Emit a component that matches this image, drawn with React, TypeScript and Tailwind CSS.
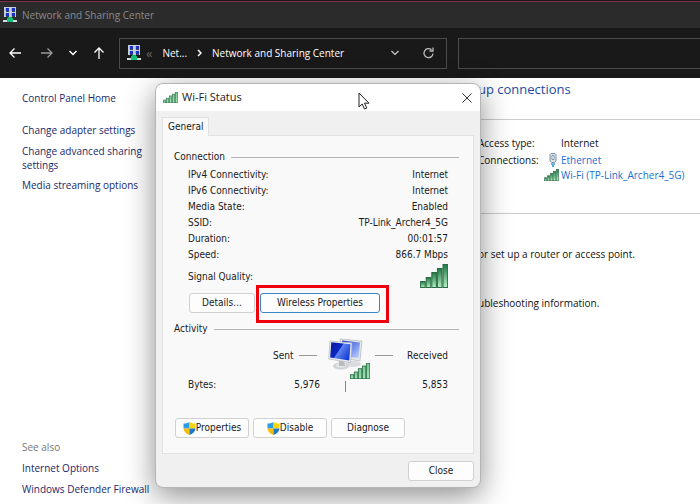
import type { ReactNode } from "react"

const CONNECTION_ROWS = [
  { label: "IPv4 Connectivity:", value: "Internet" },
  { label: "IPv6 Connectivity:", value: "Internet" },
  { label: "Media State:", value: "Enabled" },
  { label: "SSID:", value: "TP-Link_Archer4_5G" },
  { label: "Duration:", value: "00:01:57" },
  { label: "Speed:", value: "866.7 Mbps" },
]

function NetworkIcon() {
  return (
    <svg width="14" height="16" viewBox="0 0 14 16" className="shrink-0" shapeRendering="crispEdges" aria-hidden="true">
      {[0, 5].map((y) =>
        [1, 7].map((x) => (
          <g key={`${x}-${y}`}>
            <rect x={x} y={y} width="6" height="5" fill="#c3cfdc" />
            <rect x={x + 2} y={y + 1} width="3" height="3" fill="#1a2fc4" />
            <rect x={x + 1} y={y + 1} width="1" height="3" fill="#8fb4ff" />
            <rect x={x + 2} y={y + 4} width="3" height="1" fill="#3a4458" />
          </g>
        ))
      )}
      <rect x="5" y="10" width="4" height="1" fill="#0fae6b" />
      <rect x="4" y="11" width="6" height="2" fill="#14b877" />
      <rect x="0" y="13" width="14" height="2" fill="#d5dbe0" />
      <rect x="4" y="12" width="6" height="3" fill="#10c27a" />
    </svg>
  )
}

function SignalBars({ className, dark }: { className: string; dark?: boolean }) {
  const bars = [6, 10, 15, 19, 23]
  return (
    <svg viewBox="0 0 28 24" preserveAspectRatio="none" className={className} aria-hidden="true">
      <defs>
        <linearGradient id={dark ? "bars-dark" : "bars-light"} x1="0" y1="0" x2="0" y2="1">
          <stop offset="0" stopColor={dark ? "#1c7a43" : "#7cc796"} />
          <stop offset="1" stopColor={dark ? "#b4f0c2" : "#a5e3b6"} />
        </linearGradient>
      </defs>
      {bars.map((h, i) => (
        <rect
          key={h}
          x={i * 5.6 + 0.6}
          y={23.5 - h}
          width="4.6"
          height={h}
          fill={dark ? "url(#bars-dark)" : "url(#bars-light)"}
          stroke={dark ? "#2c6a45" : "#34794e"}
          strokeWidth={dark ? 1 : 1.3}
        />
      ))}
    </svg>
  )
}

function Shield() {
  return (
    <svg width="13" height="13" viewBox="0 0 13 13" className="shrink-0" aria-hidden="true">
      <defs>
        <clipPath id="shield">
          <path d="M6.5 0C8.5 1.3 10.500 1.500 12.500 1.500V6C12.500 9.500 9.500 12 6.500 13C3.500 12 .5 9.500 .5 6V1.500C2.500 1.500 4.500 1.300 6.500 0Z" />
        </clipPath>
      </defs>
      <g clipPath="url(#shield)">
        <rect width="6.5" height="6.5" fill="#2a9ce4" />
        <rect x="6.5" width="6.5" height="6.5" fill="#fbd30b" />
        <rect y="6.5" width="6.5" height="6.5" fill="#f4bd0a" />
        <rect x="6.5" y="6.5" width="6.5" height="6.5" fill="#1d78c8" />
      </g>
    </svg>
  )
}

function EthernetIcon() {
  return (
    <svg width="8" height="14" viewBox="0 0 8 14" className="shrink-0" aria-hidden="true">
      <path d="M1 1.500L2 .5H6L7 1.500V8L5.500 9.500H2.500L1 8Z" fill="#d9e2ea" stroke="#7d93a8" />
      <path d="M3 2.500H5V6.500H3Z" fill="#fff" stroke="#71879c" strokeWidth=".8" />
      <rect x="2" y="10" width="4" height="2" fill="#6fb7dc" />
      <rect x="3" y="12" width="2" height="2" fill="#35aee6" />
    </svg>
  )
}

function Computers() {
  return (
    <svg width="36" height="34" viewBox="0 0 36 34" aria-hidden="true">
      <defs>
        <linearGradient id="screen" x1="0" y1="0" x2="1" y2=".6">
          <stop offset="0" stopColor="#0a1aa0" />
          <stop offset=".5" stopColor="#0d28c4" />
          <stop offset=".53" stopColor="#5f86ee" />
          <stop offset="1" stopColor="#1a3fd8" />
        </linearGradient>
        <linearGradient id="screen-back" x1="0" y1="0" x2="1" y2="1">
          <stop offset="0" stopColor="#1b3ed2" />
          <stop offset="1" stopColor="#c5d6ff" />
        </linearGradient>
      </defs>
      <ellipse cx="25" cy="26" rx="8" ry="3" fill="#d9dbdd" />
      <path d="M12 1L34 3L32 23L14 20Z" fill="#e4e6e8" stroke="#b3b7bc" strokeWidth=".7" />
      <path d="M14 2.500L32 4.500L30.500 20L15 18Z" fill="url(#screen-back)" />
      <ellipse cx="13" cy="28" rx="8" ry="3.500" fill="#cfd2d5" />
      <ellipse cx="13" cy="27.500" rx="5" ry="2" fill="#e6e8ea" />
      <path d="M11 21H16L17 28H11Z" fill="#b9bdc1" />
      <path d="M2 3L24 5L22.500 24.500L.8 21Z" fill="#eceeef" stroke="#b3b7bc" strokeWidth=".7" />
      <path d="M3.300 4.300L22.500 6.200L21.200 22.600L2.200 19.500Z" fill="url(#screen)" />
    </svg>
  )
}

function GroupTitle({ children }: { children: ReactNode }) {
  return (
    <div className="flex items-center gap-1.5 pl-[11px] pr-[14px]">
      <h2 className="leading-4">{children}</h2>
      <div className="h-px flex-1 bg-[#b4b4b4]" />
    </div>
  )
}

function DialogButton({ children, className = "w-[74px]" }: { children: ReactNode; className?: string }) {
  return (
    <button
      type="button"
      className={`flex h-5 items-center justify-center rounded-[3px] border bg-[#fdfdfd] leading-4 ${className} ${
        className.includes("border-") ? "" : "border-[#d0d0d0]"
      }`}
    >
      {children}
    </button>
  )
}

function StatusDialog() {
  return (
    <div
      role="dialog"
      aria-label="Wi-Fi Status"
      className="absolute left-[155px] top-[83px] w-[326px] rounded-lg border border-[#b5b5b5] bg-[#f0f0f0] font-['DejaVu_Sans_Condensed','DejaVu_Sans',sans-serif] text-[10px] text-[#1a1a1a] shadow-[0_8px_30px_rgba(0,0,0,0.45)]"
    >
      <div className="flex h-[27px] items-center rounded-t-lg bg-white pl-[7px] pr-2">
        <SignalBars className="h-[11px] w-[15px]" />
        <h1 className="ml-1 flex-1 font-['Open_Sans',sans-serif] text-[11px]">Wi-Fi Status</h1>
        <button type="button" aria-label="Close window">
          <svg width="10" height="10" viewBox="0 0 10 10" stroke="#333" aria-hidden="true">
            <path d="M.5 .5L9.500 9.500M9.500 .5L.5 9.500" />
          </svg>
        </button>
      </div>

      <div className="px-[6px] pb-[6px] pt-[6px]">
        <div role="tablist" className="flex">
          <button
            type="button"
            role="tab"
            aria-selected="true"
            className="relative z-10 -mb-px h-[19px] border border-b-0 border-[#e2e2e2] bg-[#f9f9f9] px-[5px] leading-4"
          >
            General
          </button>
        </div>

        <div role="tabpanel" className="border border-[#e2e2e2] bg-[#f9f9f9] pb-[15px] pt-[13px]">
          <GroupTitle>Connection</GroupTitle>
          <dl className="mt-0.5 px-[25px]">
            {CONNECTION_ROWS.map((row) => (
              <div key={row.label} className="flex justify-between leading-4">
                <dt>{row.label}</dt>
                <dd>{row.value}</dd>
              </div>
            ))}
            <div className="flex h-[26px] items-center justify-between">
              <dt>Signal Quality:</dt>
              <dd>
                <SignalBars dark className="h-6 w-7" />
              </dd>
            </div>
          </dl>
          <div className="mt-1 flex gap-[5px] px-[26px]">
            <DialogButton className="w-[66px]">Details...</DialogButton>
            <div className="relative">
              <DialogButton className="w-[120px] border-[#3a87c8]">Wireless Properties</DialogButton>
              <div className="pointer-events-none absolute -bottom-[10px] -left-1 -right-[9px] -top-2 border-[3px] border-[#f00008]" />
            </div>
          </div>

          <div className="mt-2">
            <GroupTitle>Activity</GroupTitle>
          </div>
          <div className="flex h-9 items-center justify-between pl-[110px] pr-[25px]">
            <div className="flex items-center gap-1.5">
              <span>Sent</span>
              <span className="h-px w-[18px] bg-[#999]" />
            </div>
            <div className="relative ml-1.5 flex w-[42px] items-start">
              <Computers />
              <SignalBars className="absolute -bottom-[7px] right-0 h-4 w-5" />
            </div>
            <div className="flex items-center gap-3.5">
              <span className="h-px w-[18px] bg-[#999]" />
              <span>Received</span>
            </div>
          </div>
          <div className="mt-[3px] flex h-4 items-center px-[25px]">
            <span className="flex-1">Bytes:</span>
            <span>5,976</span>
            <span className="ml-[25px] mt-1 h-[11px] w-px bg-[#888]" />
            <span className="w-[102px] text-right">5,853</span>
          </div>

          <div className="mt-[26px] flex gap-1 px-3">
            <DialogButton>
              <Shield />
              Properties
            </DialogButton>
            <DialogButton>
              <Shield />
              Disable
            </DialogButton>
            <DialogButton>Diagnose</DialogButton>
          </div>
        </div>

        <div className="mt-[7px] flex justify-end">
          <DialogButton className="w-[66px]">Close</DialogButton>
        </div>
      </div>
    </div>
  )
}

function Toolbar() {
  return (
    <nav className="flex h-[50px] items-center bg-[#191919] text-white">
      <div className="flex w-[119px] shrink-0 items-center gap-4 pl-[9px]">
        <button type="button" aria-label="Back">
          <svg width="12" height="12" viewBox="0 0 12 12" fill="none" stroke="#fff" strokeWidth="1.300" aria-hidden="true">
            <path d="M12 6H1M5.500 1.500L1 6L5.500 10.500" />
          </svg>
        </button>
        <button type="button" aria-label="Forward" className="ml-1">
          <svg width="12" height="12" viewBox="0 0 12 12" fill="none" stroke="#999" strokeWidth="1.300" aria-hidden="true">
            <path d="M0 6H11M6.500 1.500L11 6L6.500 10.500" />
          </svg>
        </button>
        <button type="button" aria-label="Recent locations">
          <svg width="8" height="6" viewBox="0 0 8 6" fill="none" stroke="#fff" strokeWidth="1.500" aria-hidden="true">
            <path d="M.5 1L4 4.500L7.500 1" />
          </svg>
        </button>
        <button type="button" aria-label="Up">
          <svg width="12" height="12" viewBox="0 0 12 12" fill="none" stroke="#fff" strokeWidth="1.300" aria-hidden="true">
            <path d="M6 12V1M1.500 5.500L6 1L10.500 5.500" />
          </svg>
        </button>
      </div>

      <div className="flex h-[31px] w-[328px] shrink-0 items-center border border-[#4b4b4b] pl-[7px] pr-3">
        <NetworkIcon />
        <span className="ml-[5px] text-[13px] leading-4 text-[#666]">«</span>
        <span className="ml-2.5">Net...</span>
        <svg width="5" height="8" viewBox="0 0 5 8" fill="none" stroke="#fff" strokeWidth="1.500" className="mx-2.5" aria-hidden="true">
          <path d="M1 1L4 4L1 7" />
        </svg>
        <span className="flex-1 whitespace-nowrap">Network and Sharing Center</span>
        <button type="button" aria-label="Previous locations">
          <svg width="8" height="6" viewBox="0 0 8 6" fill="none" stroke="#ccc" strokeWidth="1.200" aria-hidden="true">
            <path d="M.5 1L4 4.500L7.500 1" />
          </svg>
        </button>
        <button type="button" aria-label="Refresh" className="ml-6">
          <svg width="11" height="12" viewBox="0 0 11 12" fill="none" stroke="#bbb" strokeWidth="1.300" aria-hidden="true">
            <path d="M10 6.500A4.500 4.500 0 1 1 8.500 2.800M10 .5V4H6.500" />
          </svg>
        </button>
      </div>

      <input
        type="text"
        aria-label="Search Control Panel"
        className="ml-[11px] h-[31px] min-w-0 flex-1 border border-r-0 border-[#4b4b4b] bg-transparent px-2 outline-none"
      />
    </nav>
  )
}

export default function App() {
  return (
    <div className="relative flex min-h-screen flex-col overflow-hidden bg-white font-['Open_Sans',sans-serif] text-[10px] text-[#111]">
      <div className="h-px bg-[#1b1518]" />
      <div className="h-px bg-[#7c2f45]" />
      <header className="flex h-[26px] items-center gap-[5px] bg-[#2b2b2b] pl-[3px] text-[#8a8a8a]">
        <NetworkIcon />
        <span>Network and Sharing Center</span>
      </header>
      <Toolbar />

      <div className="flex flex-1">
        <aside className="flex w-[156px] shrink-0 flex-col pb-[7px] pl-[22px] text-[#21286b]">
          <a href="#home" className="mt-3 leading-4">Control Panel Home</a>
          <a href="#adapter" className="mt-4 leading-4">Change adapter settings</a>
          <a href="#sharing" className="mt-1.5 leading-[14px]">
            Change advanced sharing settings
          </a>
          <a href="#streaming" className="mt-[5px] leading-4">Media streaming options</a>
          <span className="mt-auto leading-4 text-[#777]">See also</span>
          <a href="#internet" className="mt-[5px] leading-4">Internet Options</a>
          <a href="#firewall" className="mt-[5px] whitespace-nowrap leading-4">Windows Defender Firewall</a>
        </aside>

        <main className="ml-[322px] flex-1">
          <h2 className="flex h-[42px] items-center border-b border-[#ccc] pb-[18px] text-[13px] text-[#1f4aa3]">
            up connections
          </h2>
          <div className="h-[94px] border-b border-[#ccc] pt-[15px]">
            <div className="flex h-4 items-center">
              <span className="w-[83px]">Access type:</span>
              <span>Internet</span>
            </div>
            <div className="flex">
              <span className="w-[66px] leading-[18px]">Connections:</span>
              <div className="flex flex-col">
                <a href="#ethernet" className="flex h-[18px] items-center text-[#1a6fd0]">
                  <span className="flex w-[17px] justify-center">
                    <EthernetIcon />
                  </span>
                  Ethernet
                </a>
                <a href="#wifi" className="flex h-3 items-center gap-0.5 whitespace-nowrap text-[#1a6fd0]">
                  <SignalBars dark className="h-3 w-[15px]" />
                  Wi-Fi (TP-Link_Archer4_5G)
                </a>
              </div>
            </div>
          </div>
          <p className="mt-8 leading-4">or set up a router or access point.</p>
          <p className="mt-[33px] leading-4">ubleshooting information.</p>
        </main>
      </div>

      <StatusDialog />

      {/* Mouse pointer */}
      <svg width="12" height="18" viewBox="0 0 12 18" className="absolute left-[358px] top-[92px]" aria-hidden="true">
        <path d="M1 1V15L4.200 12L6.500 17L8.800 16L6.500 11.200H11Z" fill="#fff" stroke="#222" />
      </svg>
    </div>
  )
}
